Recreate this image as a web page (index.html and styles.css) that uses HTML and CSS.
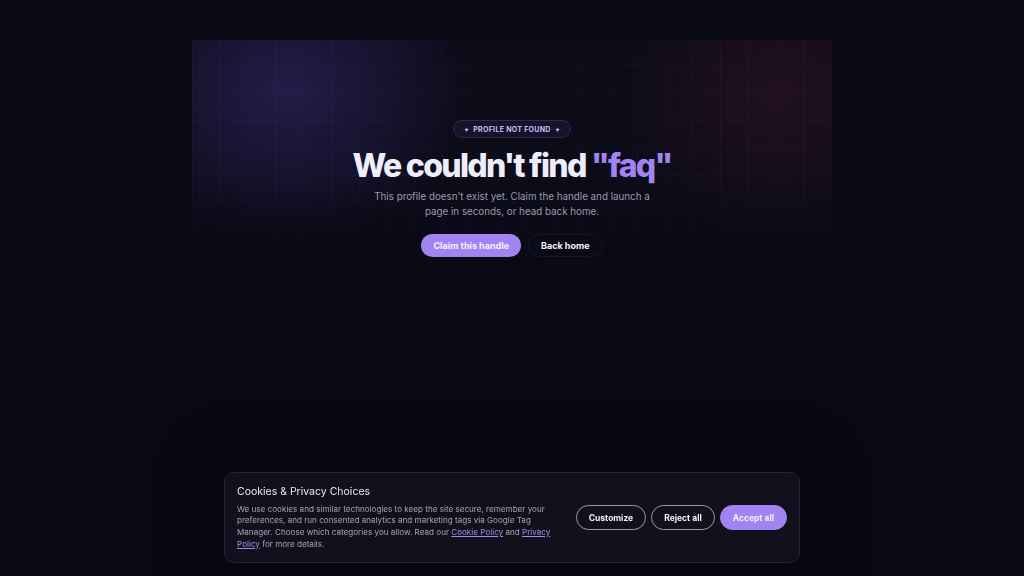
FILE: index.html
```html
<!DOCTYPE html>
<html lang="en">
<head>
<meta charset="utf-8">
<title>Profile not found</title>
<link rel="stylesheet" href="styles.css">
</head>
<body>
<main class="page">
  <section class="hero">
    <div class="hero-bg"></div>
    <div class="hero-content">
      <div class="badge"><span class="spark">✦</span> PROFILE NOT FOUND <span class="spark">✦</span></div>
      <h1 class="title">We couldn't find <span class="accent">"faq"</span></h1>
      <p class="lead">This profile doesn't exist yet. Claim the handle and launch a page in seconds, or head back home.</p>
      <div class="actions">
        <a class="btn btn-primary" href="#">Claim this handle</a>
        <a class="btn btn-ghost" href="#">Back home</a>
      </div>
    </div>
  </section>
</main>
<div class="cookie">
  <div class="cookie-text">
    <h2 class="cookie-title">Cookies &amp; Privacy Choices</h2>
    <p class="cookie-body">We use cookies and similar technologies to keep the site secure, remember your preferences, and run consented analytics and marketing tags via Google Tag Manager. Choose which categories you allow. Read our <a href="#">Cookie Policy</a> and <a href="#">Privacy Policy</a> for more details.</p>
  </div>
  <div class="cookie-actions">
    <button class="cbtn cbtn-outline">Customize</button>
    <button class="cbtn cbtn-outline">Reject all</button>
    <button class="cbtn cbtn-primary">Accept all</button>
  </div>
</div>
</body>
</html>
```
FILE: styles.css
```css
* { box-sizing: border-box; }
html, body { margin: 0; padding: 0; }
body {
  background: #090914;
  font-family: "Inter", "Noto Sans", sans-serif;
  color: #ecebfa;
  height: 576px;
  overflow: hidden;
}
.page {
  padding-top: 40px;
}
.hero {
  position: relative;
  width: 640px;
  height: 246px;
  margin: 0 auto;
  overflow: hidden;
}
.hero-bg {
  position: absolute;
  inset: 0;
  background:
    linear-gradient(rgba(120,120,190,0.05) 1px, transparent 1px),
    linear-gradient(90deg, rgba(120,120,190,0.05) 1px, transparent 1px),
    radial-gradient(ellipse 230px 190px at 95px 50px, rgba(75,58,160,0.36), transparent 80%),
    radial-gradient(ellipse 210px 180px at 585px 55px, rgba(100,30,60,0.24), transparent 80%),
    #0c0b18;
  background-size: 27.8px 27.6px, 27.8px 27.6px, auto, auto, auto;
  background-position: 0 -3px, 0 0, 0 0, 0 0, 0 0;
  -webkit-mask-image: linear-gradient(#000 60%, transparent 100%);
  mask-image: linear-gradient(#000 60%, transparent 100%);
}
.hero-content {
  position: relative;
  display: flex;
  flex-direction: column;
  align-items: center;
  padding-top: 80px;
}
.badge {
  height: 18px;
  padding: 0 10px;
  display: flex;
  align-items: center;
  gap: 4px;
  border: 1px solid #2c2a46;
  background: #14132a;
  border-radius: 999px;
  font-size: 7px;
  font-weight: 700;
  letter-spacing: 0.3px;
  color: #c9bdf5;
}
.spark { font-size: 6px; }
.title {
  margin: 9px 0 0;
  font-size: 32px;
  line-height: 38px;
  font-weight: 800;
  letter-spacing: -1.7px;
  color: #eeedfb;
}
.accent { color: #a283f2; }
.lead {
  margin: 5px 0 0;
  width: 284px;
  text-align: center;
  font-size: 9.8px;
  line-height: 14.5px;
  color: #9c9bb0;
}
.actions {
  display: flex;
  gap: 7px;
  margin-top: 15px;
}
.btn {
  height: 23px;
  display: flex;
  align-items: center;
  padding: 0 12px;
  border-radius: 999px;
  font-size: 9px;
  font-weight: 700;
  text-decoration: none;
  color: #f5f4ff;
}
.btn-primary { background: #a382f2; }
.btn-ghost { border: 1px solid #16152a; background: #0a0a16; }

.cookie {
  position: fixed;
  left: 224px;
  bottom: 13px;
  width: 576px;
  height: 91px;
  background: #11111d;
  border: 1px solid #24243a;
  border-radius: 10px;
  box-shadow: 0 0 50px 20px rgba(0,0,0,0.35);
  display: flex;
  align-items: center;
  justify-content: space-between;
  padding: 0 12px 0 12px;
}
.cookie-text { width: 320px; }
.cookie-title {
  margin: 0;
  font-size: 10.5px;
  line-height: 14px;
  font-weight: 400;
  color: #e8e8f2;
}
.cookie-body {
  margin: 5px 0 0;
  font-size: 8.1px;
  line-height: 11.6px;
  color: #a3a3b4;
}
.cookie-body a { color: #a48af0; }
.cookie-actions {
  display: flex;
  gap: 5px;
}
.cbtn {
  font-family: inherit;
  height: 25px;
  padding: 0 12px;
  border-radius: 999px;
  font-size: 8.5px;
  font-weight: 700;
  color: #f3f3fb;
  cursor: pointer;
}
.cbtn-outline {
  background: transparent;
  border: 1px solid #9a9aa8;
}
.cbtn-primary {
  background: #a382f2;
  border: 1px solid #a382f2;
}
```
